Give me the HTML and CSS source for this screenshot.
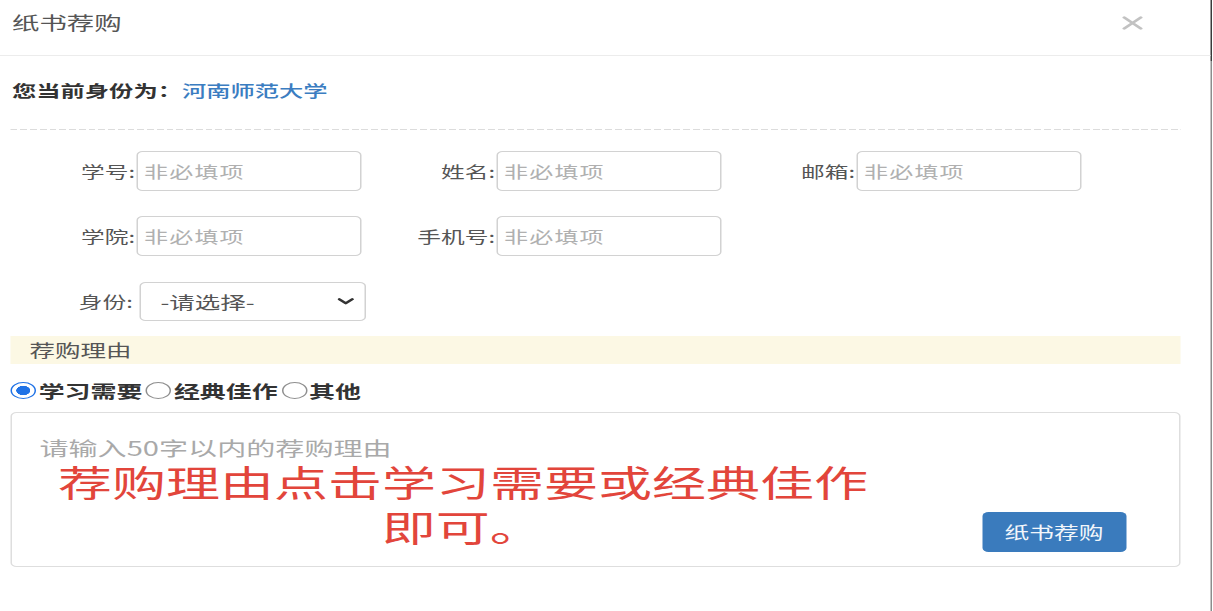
FILE: index.html
```html
<!DOCTYPE html>
<html lang="zh-CN">
<head>
<meta charset="utf-8">
<title>纸书荐购</title>
<link rel="stylesheet" href="styles.css">
</head>
<body>
<div class="stage">
  <div class="dialog">
    <header class="dlg-head">
      <span class="dlg-title">纸书荐购</span>
      <button class="dlg-close" type="button" aria-label="关闭">
        <svg width="14" height="14" viewBox="0 0 14 14"><path d="M1.5 1.5 L12.5 12.5 M12.5 1.5 L1.5 12.5" stroke="#c2c2c2" stroke-width="2.4" fill="none" stroke-linecap="round"/></svg>
      </button>
    </header>
    <div class="dlg-body">
      <div class="identity">您当前身份为：<span class="org">河南师范大学</span></div>
      <div class="divider"></div>
      <form class="fields">
        <div class="row">
          <label class="field"><span class="lbl">学号:</span><input class="inp" type="text" placeholder="非必填项"></label>
          <label class="field"><span class="lbl">姓名:</span><input class="inp" type="text" placeholder="非必填项"></label>
          <label class="field"><span class="lbl">邮箱:</span><input class="inp" type="text" placeholder="非必填项"></label>
        </div>
        <div class="row">
          <label class="field"><span class="lbl">学院:</span><input class="inp" type="text" placeholder="非必填项"></label>
          <label class="field"><span class="lbl">手机号:</span><input class="inp" type="text" placeholder="非必填项"></label>
        </div>
        <div class="row">
          <div class="field"><span class="lbl lbl-sel">身份:</span>
            <div class="select"><span>-请选择-</span>
              <svg width="11" height="7" viewBox="0 0 11 7"><path d="M1.2 1.2 L5.5 5.3 L9.8 1.2" stroke="#333" stroke-width="2.2" fill="none" stroke-linecap="round" stroke-linejoin="round"/></svg>
            </div>
          </div>
        </div>
      </form>
      <div class="section-bar">荐购理由</div>
      <div class="radios">
        <span class="radio checked"></span><span class="rtxt">学习需要</span>
        <span class="radio"></span><span class="rtxt">经典佳作</span>
        <span class="radio"></span><span class="rtxt">其他</span>
      </div>
      <div class="reason-box">
        <div class="reason-ph">请输入50字以内的荐购理由</div>
        <div class="annotation">
          <div class="anno-line">荐购理由点击学习需要或经典佳作</div>
          <div class="anno-line">即可。</div>
        </div>
        <button class="submit" type="button">纸书荐购</button>
      </div>
    </div>
  </div>
</div>
</body>
</html>
```
FILE: styles.css
```css
html, body {
  margin: 0;
  padding: 0;
  background: #ffffff;
  overflow: hidden;
}
body {
  font-family: "Noto Sans CJK SC", "Noto Sans", sans-serif;
  color: #555;
}
.stage {
  width: 808.67px;
  height: 611px;
  transform: scaleX(1.5);
  transform-origin: 0 0;
}
.dialog {
  box-sizing: border-box;
  width: 808px;
  height: 611px;
  border-style: solid;
  border-width: 0 1.34px 0 0;
  border-image: linear-gradient(to bottom, #3a3a3a 0, #3a3a3a 62px, #8c8c8c 62px, #8c8c8c 100%) 1;
}
.dlg-head {
  display: flex;
  align-items: flex-start;
  height: 55px;
  border-bottom: 1px solid #ececec;
}
.dlg-title {
  margin: 10px 0 0 8px;
  font-size: 18.3px;
  line-height: 24px;
  color: #555;
}
.dlg-close {
  margin: 15.5px 45.5px 0 auto;
  padding: 0;
  border: 0;
  background: transparent;
  width: 14px;
  height: 14px;
  display: block;
}
.dlg-close svg { display: block; }
.identity {
  margin: 22px 0 0 8px;
  font-size: 16.2px;
  line-height: 24px;
  font-weight: 700;
  color: #333;
}
.org {
  font-weight: 500;
  color: #3b7dc1;
}
.divider {
  margin: 27px 0 0 6.7px;
  width: 780px;
  height: 1px;
  background: repeating-linear-gradient(to right, #dcdcdc 0, #dcdcdc 4.5px, transparent 4.5px, transparent 6.5px);
}
.fields {
  margin: 21px 0 0 1px;
  display: flex;
  flex-direction: column;
  gap: 25px;
}
.row {
  display: flex;
  height: 40px;
}
.field {
  display: flex;
  align-items: center;
  width: 240px;
  flex: none;
}
.lbl {
  width: 90px;
  flex: none;
  box-sizing: border-box;
  padding-right: 1px;
  text-align: right;
  font-size: 15.8px;
  color: #555;
  white-space: nowrap;
}
.lbl-sel { padding-right: 2.5px; }
.inp {
  flex: none;
  box-sizing: border-box;
  width: 150px;
  height: 40px;
  margin: 0;
  padding: 0 4px;
  border: 1px solid #d2d2d2;
  border-radius: 4px;
  font-family: "Noto Sans CJK SC", sans-serif;
  font-size: 16px;
  letter-spacing: 0.8px;
  color: #555;
  background: #fff;
  outline: none;
}
.inp::placeholder { color: #b0b0b0; }
.select {
  flex: none;
  box-sizing: border-box;
  width: 151px;
  height: 39px;
  margin-left: 2px;
  padding: 0 7px 0 13px;
  border: 1px solid #d2d2d2;
  border-radius: 4px;
  display: flex;
  align-items: center;
  justify-content: space-between;
  font-size: 17px;
  color: #555;
}
.select svg { display: block; }
.section-bar {
  margin: 14.5px 0 0 6.7px;
  width: 780px;
  height: 28px;
  box-sizing: border-box;
  padding-left: 13px;
  background: #fcf8e4;
  font-size: 17px;
  line-height: 28px;
  color: #555;
}
.radios {
  margin: 15px 0 0 7.3px;
  height: 24px;
  display: flex;
  align-items: center;
}
.radio {
  box-sizing: border-box;
  width: 17px;
  height: 17px;
  border-radius: 50%;
  border: 1px solid #8f8f8f;
  background: #fff;
  margin-right: 1.5px;
  flex: none;
}
.radio.checked {
  border: 1.8px solid #1f72e6;
  background: radial-gradient(circle, #1f72e6 0, #1f72e6 4.5px, #fff 4.8px);
}
.rtxt {
  font-size: 17.3px;
  font-weight: 700;
  color: #333;
  margin-right: 2.5px;
  line-height: 24px;
}
.reason-box {
  position: relative;
  margin: 9px 0 0 7.3px;
  width: 779.4px;
  height: 155px;
  box-sizing: border-box;
  border: 1px solid #dedede;
  border-radius: 4px;
  padding: 23px 35px 14px 18px;
  display: flex;
  flex-direction: column;
}
.reason-ph {
  font-size: 19.4px;
  line-height: 24px;
  color: #a9a9a9;
}
.annotation {
  position: absolute;
  left: 30.3px;
  top: 46px;
  width: 540px;
  text-align: center;
  font-size: 36px;
  color: #e2453b;
}
.anno-line {
  height: 45px;
  line-height: 45px;
}
.submit {
  margin-top: auto;
  align-self: flex-end;
  width: 96px;
  height: 40px;
  border: 0;
  border-radius: 4px;
  background: #3a7bbd;
  color: #f2f6fb;
  font-family: "Noto Sans CJK SC", sans-serif;
  font-size: 16.5px;
  padding: 0;
}
```
